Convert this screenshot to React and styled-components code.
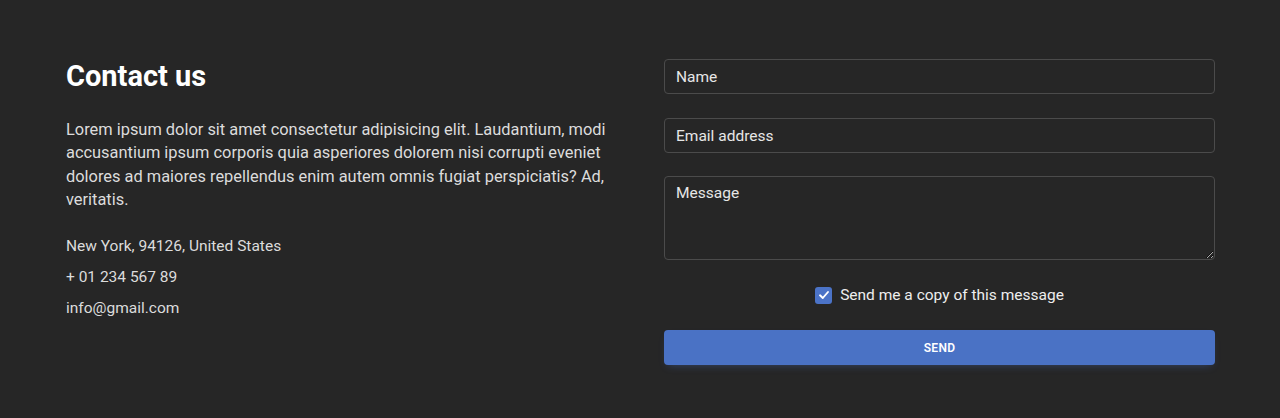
import React from 'react'
import styled, { createGlobalStyle } from 'styled-components'

const Global = createGlobalStyle`
  body {
    margin: 0;
    background: #262626;
    font-family: Roboto, "Liberation Sans", sans-serif;
  }
  * { box-sizing: border-box; }
`

export default function App() {
  return (
    <>
      <Global />
      <Section>
        <Info>
          <Title>Contact us</Title>
          <Text>
            Lorem ipsum dolor sit amet consectetur adipisicing elit. Laudantium, modi
            accusantium ipsum corporis quia asperiores dolorem nisi corrupti eveniet
            dolores ad maiores repellendus enim autem omnis fugiat perspiciatis? Ad,
            veritatis.
          </Text>
          <Detail>New York, 94126, United States</Detail>
          <Detail>+ 01 234 567 89</Detail>
          <Detail>info@gmail.com</Detail>
        </Info>
        <Form onSubmit={e => e.preventDefault()}>
          <Field type="text" placeholder="Name" $gap={24} />
          <Field type="email" placeholder="Email address" $gap={23} />
          <Area placeholder="Message" />
          <CheckRow>
            <Box>
              <svg width="12" height="12" viewBox="0 0 12 12">
                <path d="M2 6.3 L4.8 9 L10 3" fill="none" stroke="#fff" strokeWidth="1.9" strokeLinecap="round" strokeLinejoin="round" />
              </svg>
            </Box>
            <span>Send me a copy of this message</span>
          </CheckRow>
          <Send type="submit">Send</Send>
        </Form>
      </Section>
    </>
  )
}

const Section = styled.div`
display: grid;
grid-template-columns: 550px 551px;
column-gap: 48px;
padding: 59px 65px 0 66px;
height: 418px;
`;

const Info = styled.div`
display: flex;
flex-direction: column;
`;

const Title = styled.h2`
margin: 0 0 25px;
font-size: 29px;
font-weight: 700;
line-height: 34px;
color: #fff;
`;

const Text = styled.p`
margin: 0 0 20px;
font-size: 16.4px;
line-height: 23.3px;
color: #dcdcdc;
`;

const Detail = styled.div`
font-size: 15.5px;
line-height: 31px;
color: #dcdcdc;
`;

const Form = styled.form`
display: flex;
flex-direction: column;
`;

const fieldBase = `
width: 100%;
background: transparent;
border: 1px solid #4b4b4b;
border-radius: 4px;
font-family: Roboto, "Liberation Sans", sans-serif;
font-size: 15.5px;
color: #eee;
padding: 1px 11px 0;
outline: none;
&::placeholder { color: #e6e6e6; opacity: 1; }
`;

const Field = styled.input`
${fieldBase}
height: 35px;
margin-bottom: ${p => p.$gap}px;
`;

const Area = styled.textarea`
${fieldBase}
height: 84px;
padding-top: 7px;
line-height: 19px;
resize: vertical;
display: block;
`;

const CheckRow = styled.label`
display: flex;
align-items: center;
justify-content: center;
gap: 8px;
margin: 26px 0 26px;
font-size: 15.5px;
color: #eee;
height: 18px;
`;

const Box = styled.span`
width: 17px;
height: 17px;
border-radius: 3px;
background: #4b73c7;
display: flex;
align-items: center;
justify-content: center;
`;

const Send = styled.button`
height: 35px;
width: 100%;
border: none;
border-radius: 4px;
background: #4a72c5;
color: #fff;
font-family: Roboto, "Liberation Sans", sans-serif;
font-size: 12px;
font-weight: 600;
text-transform: uppercase;
letter-spacing: 0.3px;
box-shadow: 0 4px 9px -4px rgba(74, 114, 197, 0.45);
cursor: pointer;
`;
